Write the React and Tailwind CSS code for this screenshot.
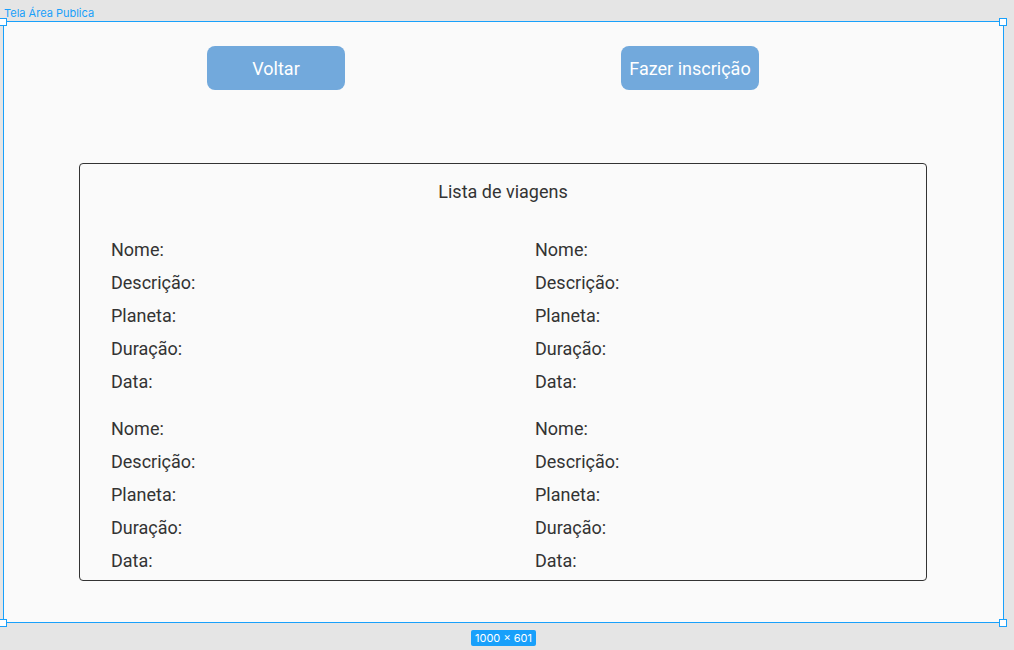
import React from "react";

const fields = ["Nome:", "Descrição:", "Planeta:", "Duração:", "Data:"];

const Trip = ({ pad }) => (
  <div className={`flex flex-col ${pad}`}>
    {fields.map((f) => (
      <div key={f} className="h-[33px] leading-[33px] text-[18px] text-[#333333]">
        {f}
      </div>
    ))}
  </div>
);

const Handle = ({ className }) => (
  <div className={`absolute w-[8px] h-[8px] bg-white border border-[#18a0fb] ${className}`} />
);

export default function App() {
  return (
    <div
      className="relative w-[1014px] h-[650px] bg-[#e5e5e5] overflow-hidden"
      style={{ fontFamily: "Roboto, 'Liberation Sans', sans-serif" }}
    >
      <div className="absolute left-[4px] top-[6px] text-[11px] leading-[14px] text-[#18a0fb]" style={{ fontFamily: "Inter, sans-serif" }}>
        Tela Área Publica
      </div>

      {/* frame */}
      <div className="absolute left-[3px] top-[21px] w-[1001px] h-[602px] bg-[#fafafa] border border-[#18a0fb]">
        <div className="flex pl-[203px] pt-[24px] gap-[276px]">
          <button className="w-[138px] h-[44px] rounded-[8px] bg-[#72a9dc] text-white text-[18px]">
            Voltar
          </button>
          <button className="w-[138px] h-[44px] rounded-[8px] bg-[#72a9dc] text-white text-[18px]">
            Fazer inscrição
          </button>
        </div>

        <div className="ml-[75px] mt-[73px] w-[848px] h-[418px] border border-[#333333] rounded-[4px]">
          <div className="pt-[16px] text-center text-[18px] leading-[24px] text-[#333333]">
            Lista de viagens
          </div>
          <div className="grid grid-cols-2 mt-[29px]">
            <Trip pad="pl-[31px]" />
            <Trip pad="pl-8" />
          </div>
          <div className="grid grid-cols-2 mt-[14px]">
            <Trip pad="pl-[31px]" />
            <Trip pad="pl-8" />
          </div>
        </div>
      </div>

      <Handle className="left-[-1px] top-[18px]" />
      <Handle className="left-[999px] top-[18px]" />
      <Handle className="left-[-1px] top-[619px]" />
      <Handle className="left-[999px] top-[619px]" />

      <div className="absolute left-[471px] top-[630px] h-[16px] px-[4px] rounded-[2px] bg-[#18a0fb] text-white text-[11px] leading-[16px]" style={{ fontFamily: "Inter, sans-serif" }}>
        1000 × 601
      </div>
    </div>
  );
}
